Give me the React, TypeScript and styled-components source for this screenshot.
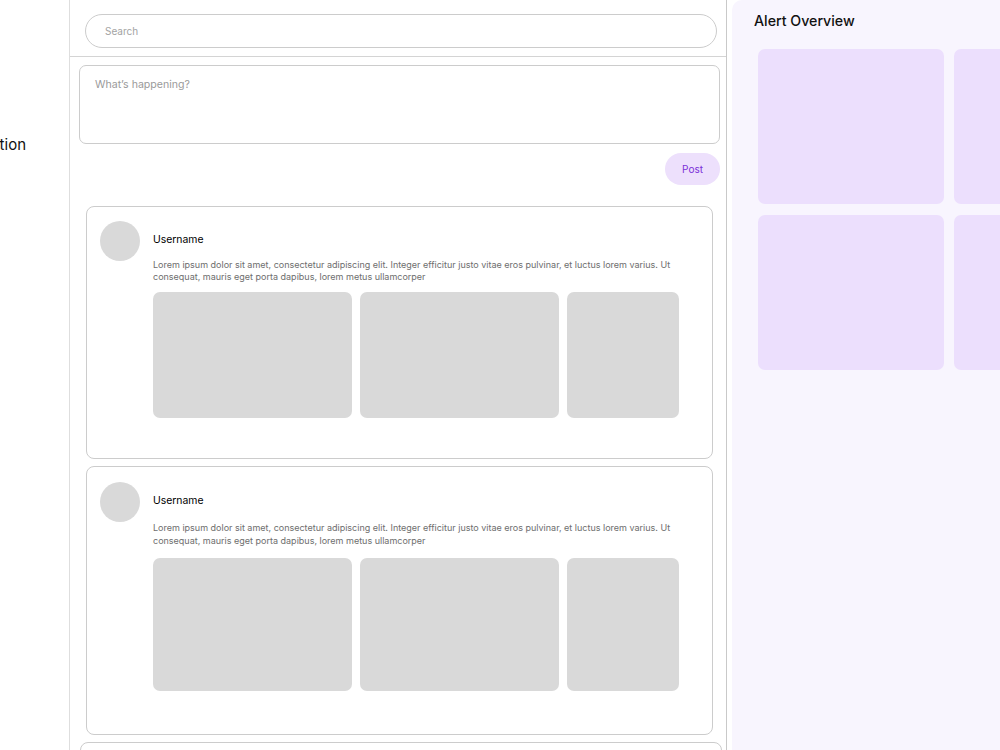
import React from "react";
import styled, { createGlobalStyle } from "styled-components";

const GlobalStyle = createGlobalStyle`
  html, body {
    margin: 0;
    padding: 0;
    background: #ffffff;
    overflow: hidden;
  }
  body {
    font-family: "Inter", "Noto Sans", sans-serif;
    color: #111;
  }
`;

const Page = styled.div`
  display: flex;
  width: 1000px;
  height: 750px;
  overflow: hidden;
`;

const Sidebar = styled.nav`
  width: 69px;
  flex-shrink: 0;
  overflow: hidden;
  display: flex;
  flex-direction: column;
  padding-top: 135px;
  box-sizing: border-box;
`;

const NavItem = styled.div`
  display: flex;
  justify-content: flex-end;
  padding-right: 43px;
  white-space: nowrap;
  font-size: 15px;
  color: #111;
`;

const Main = styled.main`
  width: 656px;
  flex-shrink: 0;
  border-left: 1px solid #dedede;
  border-right: 1px solid #c9c9c9;
  display: flex;
  flex-direction: column;
  overflow: hidden;
`;

const Header = styled.header`
  padding: 14px 9px 8px 15px;
  border-bottom: 1px solid #d4d4d4;
`;

const SearchInput = styled.div`
  height: 34px;
  border: 1px solid #cccccc;
  border-radius: 18px;
  display: flex;
  align-items: center;
  padding-left: 19px;
  box-sizing: border-box;
  font-size: 10px;
  color: #a3a3a3;
`;

const Compose = styled.section`
  padding: 8px 6px 0 9px;
  display: flex;
  flex-direction: column;
  align-items: flex-end;
`;

const ComposeBox = styled.div`
  width: 100%;
  height: 79px;
  box-sizing: border-box;
  border: 1px solid #cccccc;
  border-radius: 7px;
  padding: 12px 15px;
  font-size: 10.6px;
  color: #9a9a9a;
`;

const PostButton = styled.button`
  margin-top: 9px;
  width: 55px;
  height: 32px;
  border: none;
  border-radius: 16px;
  background: #ede0fc;
  color: #7b2fd8;
  font-family: inherit;
  font-size: 10px;
  cursor: pointer;
`;

const Feed = styled.div`
  display: flex;
  flex-direction: column;
  gap: 7px;
  padding: 21px 13px 0 16px;
`;

const Card = styled.article<{ $padTop: number; $padBottom: number }>`
  border: 1px solid #cccccc;
  border-radius: 8px;
  padding: ${(p) => p.$padTop}px 32px ${(p) => p.$padBottom}px 13px;
  display: flex;
  gap: 13px;
  flex-shrink: 0;
`;

const MoreCard = styled.div`
  margin: 0 -9px 0 -6px;
  height: 40px;
  border: 1px solid #cccccc;
  border-radius: 8px;
  flex-shrink: 0;
`;

const Avatar = styled.div`
  width: 40px;
  height: 40px;
  border-radius: 50%;
  background: #d9d9d9;
  flex-shrink: 0;
`;

const Content = styled.div`
  flex: 1;
  display: flex;
  flex-direction: column;
  padding-top: 12px;
`;

const Username = styled.div`
  font-size: 10.4px;
  line-height: 14px;
  font-weight: 400;
  color: #000;
`;

const Body = styled.p<{ $lh: number; $mt: number; $mb: number }>`
  margin: ${(p) => p.$mt}px 0 ${(p) => p.$mb}px;
  font-size: 9px;
  line-height: ${(p) => p.$lh}px;
  color: #6e6e6e;
`;

const Gallery = styled.div<{ $h: number }>`
  display: grid;
  grid-template-columns: 199px 199px 112px;
  gap: 8px;
  height: ${(p) => p.$h}px;
`;

const Photo = styled.div`
  background: #d9d9d9;
  border-radius: 7px;
`;

const Panel = styled.aside`
  margin-left: 5px;
  width: 420px;
  flex-shrink: 0;
  background: #f8f5fe;
  border-top-left-radius: 10px;
  padding: 12px 0 0 22px;
  box-sizing: border-box;
`;

const PanelTitle = styled.h2`
  margin: 0;
  font-size: 14.2px;
  line-height: 18px;
  font-weight: 500;
  color: #111;
`;

const TileGrid = styled.div`
  margin-top: 19px;
  margin-left: 4px;
  display: grid;
  grid-template-columns: repeat(2, 186px);
  grid-auto-rows: 155px;
  gap: 11px 10px;
`;

const Tile = styled.div`
  background: #ecdffd;
  border-radius: 7px;
`;

const lorem =
  "Lorem ipsum dolor sit amet, consectetur adipiscing elit. Integer efficitur justo vitae eros pulvinar, et luctus lorem varius. Ut consequat, mauris eget porta dapibus, lorem metus ullamcorper";

const posts = [
  { padTop: 14, padBottom: 40, lh: 12, mt: 12, mb: 9, imgH: 126 },
  { padTop: 15, padBottom: 43, lh: 13, mt: 13, mb: 11, imgH: 133 },
];

export default function App() {
  return (
    <>
      <GlobalStyle />
      <Page>
        <Sidebar>
          <NavItem>Notification</NavItem>
        </Sidebar>
        <Main>
          <Header>
            <SearchInput>Search</SearchInput>
          </Header>
          <Compose>
            <ComposeBox>What’s happening?</ComposeBox>
            <PostButton>Post</PostButton>
          </Compose>
          <Feed>
            {posts.map((p, i) => (
              <Card key={i} $padTop={p.padTop} $padBottom={p.padBottom}>
                <Avatar />
                <Content>
                  <Username>Username</Username>
                  <Body $lh={p.lh} $mt={p.mt} $mb={p.mb}>
                    {lorem}
                  </Body>
                  <Gallery $h={p.imgH}>
                    <Photo />
                    <Photo />
                    <Photo />
                  </Gallery>
                </Content>
              </Card>
            ))}
            <MoreCard />
          </Feed>
        </Main>
        <Panel>
          <PanelTitle>Alert Overview</PanelTitle>
          <TileGrid>
            <Tile />
            <Tile />
            <Tile />
            <Tile />
          </TileGrid>
        </Panel>
      </Page>
    </>
  );
}
